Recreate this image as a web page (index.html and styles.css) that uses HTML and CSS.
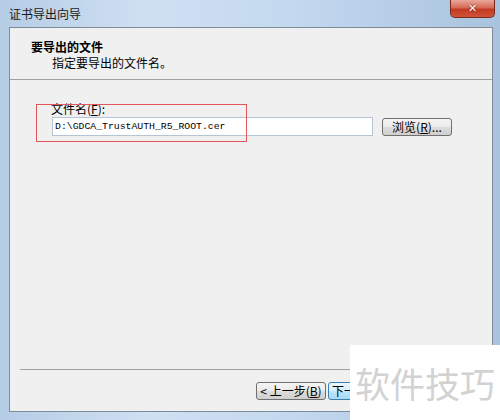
FILE: index.html
```html
<!DOCTYPE html>
<html lang="zh-CN">
<head>
    <meta charset="UTF-8">
    <title>证书导出向导</title>
    <link rel="stylesheet" href="styles.css">
</head>
<body>

    <div class="window">
        <!-- title bar -->
        <div class="titlebar">
            <span class="title">证书导出向导</span>
            <span class="close">&#x2715;</span>
        </div>

        <div class="client">
            <div class="header">
                <div class="heading">要导出的文件</div>
                <div class="subheading">指定要导出的文件名。</div>
            </div>

            <div class="content">
                <label class="field-label" for="fileName">文件名(<u>F</u>):</label>
                <div class="field-row">
                    <input class="file-input" id="fileName" type="text" value="D:\GDCA_TrustAUTH_R5_ROOT.cer">
                    <button class="btn">浏览(<u>R</u>)...</button>
                </div>
                <!-- red annotation box -->
                <div class="mark"></div>
            </div>

            <div class="footer">
                <button class="btn">&lt; 上一步(<u>B</u>)</button>
                <button class="btn btn-default">下一步</button>
            </div>
        </div>

        <div class="watermark">软件技巧</div>
    </div>

</body>
</html>
```

FILE: styles.css
```css
body {
    margin: 0;
    font-family: "Noto Sans CJK SC", sans-serif;
    font-size: 12px;
    color: #000;
}
.window {
    position: relative;
    width: 500px;
    height: 420px;
    overflow: hidden;
    display: flex;
    flex-direction: column;
    background: linear-gradient(90deg, #b6cde6 0%, #cfe0f2 30%, #c3d8ef 60%, #a9c3de 100%);
}
.titlebar {
    height: 27px;
    display: flex;
    align-items: flex-start;
    padding-left: 9px;
    flex-shrink: 0;
}
.title {
    margin-top: 6px;
    line-height: 16px;
    color: #1a1a1a;
}
.close {
    margin-left: auto;
    margin-right: 5px;
    width: 45px;
    height: 18px;
    box-sizing: border-box;
    border: 1px solid #7b2a20;
    border-top: none;
    border-radius: 0 0 5px 5px;
    background: linear-gradient(#e9a89a 0%, #d86a55 45%, #c23a24 55%, #d0533a 100%);
    color: #fff;
    font-family: "DejaVu Sans", sans-serif;
    font-size: 11px;
    font-weight: bold;
    line-height: 17px;
    text-align: center;
    text-shadow: 0 0 2px #5a1a10;
}
.client {
    margin: 0 7px 8px 9px;
    flex: 1;
    display: flex;
    flex-direction: column;
    border: 1px solid #7f8b99;
    background: #f0f0f0;
}
.header {
    height: 52px;
    box-sizing: border-box;
    padding: 11px 0 0 21px;
    border-bottom: 1px solid #a0a0a0;
    line-height: 16px;
}
.heading {
    font-weight: bold;
}
.subheading {
    padding-left: 21px;
}
.content {
    position: relative;
    flex: 1;
    padding: 21px 0 0 41px;
}
.field-label {
    display: block;
    line-height: 16px;
}
.field-row {
    display: flex;
    align-items: center;
    gap: 9px;
}
.file-input {
    width: 321px;
    height: 19px;
    box-sizing: border-box;
    margin: 0 0 0 1px;
    padding: 0 2px;
    border: 1px solid #b5c5d6;
    background: #fff;
    font-family: "Liberation Mono", monospace;
    font-size: 9.8px;
    color: #000;
}
.btn {
    width: 70px;
    height: 18px;
    padding: 0;
    box-sizing: border-box;
    border: 1px solid #707070;
    border-radius: 3px;
    background: linear-gradient(#f4f4f4 0%, #ebebeb 48%, #dddddd 52%, #cfcfcf 100%);
    font-family: "Noto Sans CJK SC", sans-serif;
    font-size: 12px;
    line-height: 16px;
    color: #000;
}
.mark {
    position: absolute;
    left: 26px;
    top: 24px;
    width: 211px;
    height: 38px;
    box-sizing: border-box;
    border: 1px solid #e0565a;
}
.footer {
    height: 42px;
    box-sizing: border-box;
    margin-left: 10px;
    border-top: 1px solid #a0a0a0;
    display: flex;
    align-items: flex-start;
    padding: 12px 0 0 236px;
    gap: 2px;
}
.btn-default {
    border-color: #3c7fb1;
    background: linear-gradient(#eaf6fd 0%, #d9f0fc 48%, #bee6fd 52%, #a7d9f5 100%);
    text-align: left;
    padding-left: 3px;
}
.watermark {
    position: absolute;
    left: 350px;
    top: 345px;
    width: 150px;
    height: 75px;
    background: #fff;
    display: flex;
    align-items: center;
    justify-content: center;
    color: #d2d2d2;
    font-size: 35px;
}
```
